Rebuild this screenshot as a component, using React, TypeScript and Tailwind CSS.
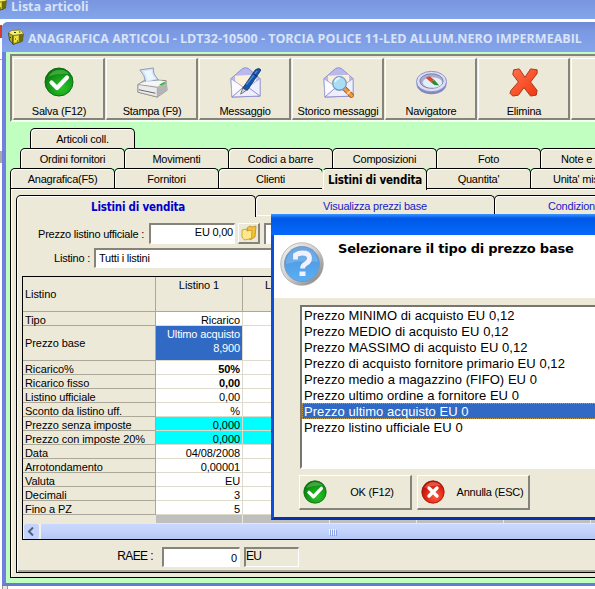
import clsx from 'clsx'
import type { ReactNode } from 'react'

const rows = [
  { label: 'Ricarico%', value: '50%', bold: true },
  { label: 'Ricarico fisso', value: '0,00', bold: true },
  { label: 'Listino ufficiale', value: '0,00' },
  { label: 'Sconto da listino uff.', value: '%' },
  { label: 'Prezzo senza imposte', value: '0,000', cyan: true },
  { label: 'Prezzo con imposte 20%', value: '0,000', cyan: true },
  { label: 'Data', value: '04/08/2008' },
  { label: 'Arrotondamento', value: '0,00001' },
  { label: 'Valuta', value: 'EU' },
  { label: 'Decimali', value: '3' },
  { label: 'Fino a PZ', value: '5' },
]

const prices = [
  'Prezzo MINIMO di acquisto EU 0,12',
  'Prezzo MEDIO di acquisto EU 0,12',
  'Prezzo MASSIMO di acquisto EU 0,12',
  'Prezzo di acquisto fornitore primario EU 0,12',
  'Prezzo medio a magazzino (FIFO) EU 0',
  'Prezzo ultimo ordine a fornitore EU 0',
  'Prezzo ultimo acquisto EU 0',
  'Prezzo listino ufficiale EU 0',
]

function AppIcon() {
  return (
    <svg width="16" height="16" viewBox="0 0 16 16" className="shrink-0">
      <path d="M.5 4 5 6v9L1.500 11z" fill="#b8b020" stroke="#3a3800" strokeWidth=".8" />
      <path d="m5 6 10-1-.5 7L5 15.500z" fill="#c9c128" stroke="#3a3800" strokeWidth=".8" />
      <path d="m.5 4 3-2.500L13 1l2.500 4L5 6.500z" fill="#f6f070" stroke="#6a6610" strokeWidth=".6" />
      <path d="m11 6 4.500-1-1 7.500-3.500 1.500z" fill="#6e6a10" />
      <path d="M6 7.500 10 7v5l-4 1.500z" fill="#eee640" />
      <path d="M6 3.500h2M11 3h1.500M7 10h1M9 12h1M2.500 8v1" stroke="#3a3800" />
    </svg>
  )
}

function CheckIcon({ size }: { size: number }) {
  return (
    <svg width={size} height={size} viewBox="0 0 30 30">
      <defs>
        <radialGradient id="green" cx=".6" cy=".7" r=".75">
          <stop offset="0" stopColor="#2cc42a" />
          <stop offset=".6" stopColor="#139817" />
          <stop offset="1" stopColor="#076c0c" />
        </radialGradient>
      </defs>
      <circle cx="15" cy="15" r="14" fill="url(#green)" stroke="#0a6f12" />
      <path d="M4 10Q9 1 19 3q4 1 6 4Q13 6 4 10z" fill="#58ba50" opacity=".65" />
      <path d="m7.500 15.500 5.500 5.500L23 10.500" fill="none" stroke="#fff" strokeWidth="4.200" strokeLinecap="round" strokeLinejoin="round" />
    </svg>
  )
}

function CancelIcon() {
  return (
    <svg width="24" height="24" viewBox="0 0 30 30">
      <defs>
        <radialGradient id="red" cx=".6" cy=".7" r=".75">
          <stop offset="0" stopColor="#ff5a3c" />
          <stop offset=".6" stopColor="#dc2414" />
          <stop offset="1" stopColor="#a50d06" />
        </radialGradient>
      </defs>
      <circle cx="15" cy="15" r="14" fill="url(#red)" stroke="#a01008" />
      <path d="M4 10Q9 1 19 3q4 1 6 4Q13 6 4 10z" fill="#f07a62" opacity=".6" />
      <path d="m10 10 10 10m0-10-10 10" stroke="#fff" strokeWidth="4.200" strokeLinecap="round" />
    </svg>
  )
}

function PrinterIcon() {
  return (
    <svg width="31" height="31" viewBox="0 0 32 32">
      <path d="m1 18 8-5 21 1 1 10-10 7-20-5z" fill="#d2d2d2" stroke="#777" strokeWidth=".8" />
      <path d="M3 3 17 1q-1 6 5 12l-13 3q-1-8-6-13z" fill="#d4e6fa" stroke="#7f93ad" strokeWidth=".9" />
      <path d="M7 4q5 0 8-1 0 6 4 9l-8 2Q10 8 7 4z" fill="#eef6ff" />
      <path d="m1 18 20 3v10L1 26z" fill="#ececec" stroke="#8a8a8a" strokeWidth=".8" />
      <path d="m21 21 10-6v9l-10 7z" fill="#b5b5b5" />
      <path d="m2 17.500 8-2.500 14-1 5 1-8 5z" fill="#f6f6f6" />
      <path d="m2 23 17 3.500v1L2 24z" fill="#666" />
      <path d="m23 18 5-2.500 2 1-5 2.500z" fill="#38b838" />
    </svg>
  )
}

function Envelope() {
  return (
    <>
      <path d="M1 12 13 1.500q3-1.500 6 0L31 12v18L2 31z" fill="#b9b9ee" stroke="#8c8cc8" />
      <path d="m5 9 22-1v13H6z" fill="#fdf0d8" />
      <path d="m1 12 13 9L2 31z" fill="#fafaff" stroke="#9a9ad4" strokeWidth=".8" />
      <path d="m31 12-13 9 13 9z" fill="#eef0ff" stroke="#9a9ad4" strokeWidth=".8" />
      <path d="m2 31 12.500-11h3L31 30z" fill="#eeeeff" stroke="#8c8cc8" strokeWidth=".9" />
    </>
  )
}

function MessageIcon() {
  return (
    <svg width="31" height="31" viewBox="0 0 32 32">
      <Envelope />
      <path d="m13 22L26 3q4-3 6 0L18 24z" fill="#1756a8" stroke="#0b2e6c" strokeWidth=".8" />
      <path d="M17 18 28 4" stroke="#4b92dc" strokeWidth="1.300" />
      <path d="m11 28 2-6 4 2z" fill="#d9d9d9" stroke="#444" strokeWidth=".7" />
      <path d="m24 7 4 3" stroke="#0b2e6c" strokeWidth="1.200" />
    </svg>
  )
}

function HistoryIcon() {
  return (
    <svg width="31" height="31" viewBox="0 0 32 32">
      <Envelope />
      <path d="m22 22 9 9" stroke="#a85018" strokeWidth="5" />
      <path d="m22 22 8.500 8.500" stroke="#f59a3c" strokeWidth="3.200" />
      <path d="m25 28 4-4" stroke="#fbe4c4" strokeWidth="1.500" />
      <circle cx="17" cy="17" r="7" fill="#a9dcf5" stroke="#7f98ba" strokeWidth="1.300" />
      <path d="M12.500 15.500q1-4 5-4" stroke="#effaff" strokeWidth="1.800" fill="none" />
    </svg>
  )
}

function CompassIcon() {
  return (
    <svg width="31" height="31" viewBox="0 0 32 32">
      <ellipse cx="16" cy="17.500" rx="15.500" ry="10.500" fill="#8586bd" />
      <ellipse cx="16" cy="15" rx="15.500" ry="10.500" fill="#dcdef8" stroke="#8e90c6" />
      <ellipse cx="16" cy="14.500" rx="12" ry="7.500" fill="#a9adcf" stroke="#7b7eae" />
      <ellipse cx="17" cy="16" rx="10" ry="5.500" fill="#e2f0f6" />
      <path d="m10 11 4-1.500 5 4-4 2z" fill="#e1452c" />
      <path d="m15 15.500 4-2 5 5.500-5-.5z" fill="#2d8b3b" />
    </svg>
  )
}

function DeleteIcon() {
  return (
    <svg width="30" height="30" viewBox="0 0 32 32">
      <defs>
        <linearGradient id="cross" x1="0" y1="0" x2="1" y2="1">
          <stop offset="0" stopColor="#ff7350" />
          <stop offset="1" stopColor="#f03810" />
        </linearGradient>
      </defs>
      <path d="m5 3 6-1 6 9 6-9 7 1v4l-7 9 7 9-1 5-6 1-7-9-6 8-6 1-3-3 1-3 8-9-6-8z" fill="url(#cross)" stroke="#a83218" strokeLinejoin="round" />
    </svg>
  )
}

function FolderIcon() {
  return (
    <svg width="16" height="16" viewBox="0 0 16 16">
      <path d="m6 3 3-2 2 1 4-1-1 11-5 3z" fill="#f3c23a" stroke="#b98b1d" strokeWidth=".8" />
      <path d="m1 5 4-1 1 2 5-1-.5 8.500-7 1.500L1 12z" fill="#ffe98a" stroke="#c29628" strokeWidth=".8" />
    </svg>
  )
}

function QuestionIcon() {
  return (
    <svg width="44" height="44" viewBox="0 0 44 44">
      <defs>
        <linearGradient id="ring" x1="0" y1="0" x2="1" y2="1">
          <stop offset="0" stopColor="#f4f4f4" />
          <stop offset=".5" stopColor="#cfcfcf" />
          <stop offset="1" stopColor="#777" />
        </linearGradient>
        <linearGradient id="ball" x1="0" y1="0" x2="0" y2="1">
          <stop offset="0" stopColor="#4c90d8" />
          <stop offset="1" stopColor="#59b0f6" />
        </linearGradient>
      </defs>
      <circle cx="22" cy="22" r="21.300" fill="url(#ring)" stroke="#a5a5a5" strokeWidth=".7" />
      <circle cx="22" cy="22" r="17.500" fill="url(#ball)" stroke="#7b93b5" strokeWidth=".8" />
      <path d="M6 22a16 16 0 0 1 32-2Q22 17 6 22z" fill="#a7cdf2" opacity=".35" />
      <path d="M15.500 17.500V13q3-2 7-2 7 0 7 5.500 0 3-3.500 5t-3.500 5" fill="none" stroke="#f1f1ff" strokeWidth="4.800" />
      <path d="M19.500 29.500h6v4.500h-6z" fill="#f1f1ff" />
    </svg>
  )
}

const tools = [
  { label: 'Salva (F12)', icon: <CheckIcon size={30} /> },
  { label: 'Stampa (F9)', icon: <PrinterIcon /> },
  { label: 'Messaggio', icon: <MessageIcon /> },
  { label: 'Storico messaggi', icon: <HistoryIcon /> },
  { label: 'Navigatore', icon: <CompassIcon /> },
  { label: 'Elimina', icon: <DeleteIcon /> },
  { label: '', icon: null },
]

function Tab({ children, className }: { children: ReactNode; className?: string }) {
  return (
    <div
      className={clsx(
        '-mr-px flex h-5 shrink-0 rounded-t-[5px] border-x border-t border-black bg-[#ece9d8] whitespace-nowrap shadow-[inset_1px_1px_0_#fff]',
        className || 'w-[105px] justify-center pt-[3px]',
      )}
    >
      {children}
    </div>
  )
}

function DialogButton({ icon, children }: { icon: ReactNode; children: ReactNode }) {
  return (
    <button className="flex h-[35px] w-[113px] items-center border-t border-r-2 border-b-2 border-l border-t-white border-r-[#85837a] border-b-[#85837a] border-l-white pl-[3px]">
      {icon}
      <span className="flex-1 pl-[7px] text-center whitespace-nowrap">{children}</span>
    </button>
  )
}

function PriceDialog() {
  return (
    <div className="absolute top-[214px] left-[271px] flex h-[306px] w-[340px] flex-col border-b-[3px] border-l-[3px] border-b-[#0831a8] border-l-[#0a4fd8] bg-[#ece9d8]">
      <div className="-ml-[3px] h-[21px] shrink-0 bg-linear-to-b from-[#3c93ff] via-[#0058e6] via-20% to-[#0669fb]" />
      <div className="flex h-[63px] shrink-0 bg-white pt-[7px] pl-[6px]">
        <QuestionIcon />
        <h2 className="-mt-px ml-[14px] font-['DejaVu_Sans'] text-[13px] leading-4 font-bold tracking-[-0.22px] whitespace-nowrap">
          Selezionare il tipo di prezzo base
        </h2>
      </div>
      <div className="mt-[7px] ml-[26px] flex h-[164px] shrink-0 flex-col border-t-2 border-b-2 border-l-2 border-t-[#77756d] border-b-white border-l-[#77756d] bg-white text-[13px] leading-[17px] tracking-[0.05px]">
        {prices.map((price, i) => (
          <div
            key={price}
            className={clsx('h-4 pl-[2px] whitespace-nowrap', i === 6 && 'bg-[#316ac5] text-white outline-1 -outline-offset-1 outline-[#c59a45] outline-dotted')}
          >
            {price}
          </div>
        ))}
      </div>
      <div className="mt-[6px] ml-[25px] flex gap-[5px]">
        <DialogButton icon={<CheckIcon size={24} />}>OK (F12)</DialogButton>
        <DialogButton icon={<CancelIcon />}>Annulla (ESC)</DialogButton>
      </div>
    </div>
  )
}

function PriceTable() {
  return (
    <div className="mt-[8px] ml-[5px] flex h-[264px] shrink-0 flex-col border-y border-l border-black tracking-[-0.08px]">
      <div className="flex h-[35px] shrink-0">
        <div className="flex w-[133px] items-center border-r border-b border-[#aca899] pl-[2px]">Listino</div>
        <div className="w-[87px] border-r border-b border-[#aca899] pt-px text-center">Listino 1</div>
        <div className="flex-1 border-b border-[#aca899] pt-px pl-[22px]">Listino 2</div>
      </div>
      <div className="flex h-[14px] shrink-0">
        <div className="w-[133px] border-r border-b border-[#aca899] pt-[2px] pl-[2px] leading-3">Tipo</div>
        <div className="w-[87px] border-r border-b border-[#dedbcc] bg-white pt-[2px] pr-[2px] text-right leading-3">Ricarico</div>
        <div className="flex-1 border-b border-[#dedbcc] bg-white" />
      </div>
      <div className="flex h-[35px] shrink-0">
        <div className="flex w-[133px] items-center border-r border-b border-[#aca899] pl-[2px]">Prezzo base</div>
        <div className="w-[87px] border-r border-b border-[#dedbcc] bg-[#316ac5] pt-px pr-[2px] text-right leading-[14px] tracking-[-0.15px] whitespace-nowrap text-white">
          Ultimo acquisto
          <br />
          8,900
        </div>
        <div className="flex-1 border-b border-[#dedbcc] bg-white" />
      </div>
      {rows.map((row) => (
        <div key={row.label} className="flex h-[14px] shrink-0 leading-3">
          <div className="w-[133px] border-r border-b border-[#aca899] pt-[2px] pl-[2px] whitespace-nowrap">{row.label}</div>
          <div
            className={clsx(
              'w-[87px] border-r border-b border-[#dedbcc] pt-[2px] pr-[2px] text-right',
              row.cyan ? 'bg-[#00ffff]' : 'bg-white',
              row.bold && 'font-bold',
            )}
          >
            {row.value}
          </div>
          <div className={clsx('flex-1 border-b border-[#dedbcc]', row.cyan ? 'bg-[#00ffff]' : 'bg-white')} />
        </div>
      ))}
      <div className="ml-[133px] flex h-[8px] shrink-0 bg-[#bfbfbf]">
        {[0, 1, 2, 3, 4].map((n) => (
          <div key={n} className="h-full w-[87px] shrink-0 border-r border-[#ece9d8]" />
        ))}
      </div>
      <div className="flex flex-1 items-center border-t border-[#ece9d8] bg-[#f3f2ea]">
        <div className="ml-px flex h-[15px] w-[15px] items-center justify-center rounded-[2px] bg-[#c4d3fc]">
          <svg width="9" height="9" viewBox="0 0 9 9">
            <path d="M6 .5 2 4.500 6 8.500" fill="none" stroke="#4d6185" strokeWidth="2" />
          </svg>
        </div>
        <div className="ml-[2px] flex h-[15px] flex-1 items-center bg-linear-to-b from-[#cad8ff] via-[#c3d2fc] to-[#b5c6f5] pl-[288px]">
          <div className="flex gap-px">
            {[0, 1, 2, 3].map((n) => (
              <div key={n} className="h-[6px] w-px bg-[#eef3ff] shadow-[1px_1px_0_#8ba5e5]" />
            ))}
          </div>
        </div>
      </div>
    </div>
  )
}

export default function App() {
  return (
    <div className="relative flex h-[589px] w-[595px] flex-col overflow-hidden bg-white font-['Liberation_Sans',sans-serif] text-[11px] leading-[14px] tracking-[-0.22px] text-black">
      <div className="flex h-[19px] shrink-0 items-start bg-linear-to-b from-[#7995e0] to-[#83a5ea]">
        <div className="-mt-1 -ml-[9px]">
          <AppIcon />
        </div>
        <span className="-mt-px ml-1 font-['Open_Sans'] text-[12.5px] leading-4 font-bold tracking-normal text-[#d8e4f8]">Lista articoli</span>
      </div>
      <div className="flex h-[567px] shrink-0 pt-[3px]">
        <div className="w-[2px] shrink-0 pt-[3px]">
          <div className="h-[13px] bg-[#d33d26]" />
          <div className="mt-[21px] h-px bg-[#aaa]" />
          <div className="mt-[91px] h-[12px] bg-[#aaa]" />
        </div>
        <div className="flex w-[593px] flex-col rounded-tl-[6px] border-b-[3px] border-l-4 border-b-[#6c79d2] border-l-[#7080dc] bg-[#c0ffc0]">
          <div className="-ml-1 flex h-[30px] shrink-0 items-center rounded-tl-[6px] bg-linear-to-b from-[#6f88d6] via-[#7b98e2] via-30% to-[#84a5eb] pl-[6px]">
            <AppIcon />
            <span className="mt-[3px] ml-[4px] font-['Open_Sans'] text-[12.5px] font-bold tracking-normal whitespace-nowrap text-[#d8e4f8]">
              ANAGRAFICA ARTICOLI - LDT32-10500 - TORCIA POLICE 11-LED ALLUM.NERO IMPERMEABIL
            </span>
          </div>
          <div className="mt-[2px] ml-1 flex h-[68px] shrink-0 gap-px overflow-hidden border-t-2 border-b-2 border-l-2 border-t-[#85837a] border-b-[#f3fff0] border-l-[#85837a] bg-[#ece9d8] pt-[2px] pl-px">
            {tools.map((tool, i) => (
              <button
                key={i}
                className="flex h-[62px] w-[92px] shrink-0 flex-col items-center border-t border-r-2 border-b-2 border-l border-t-white border-r-[#85837a] border-b-[#85837a] border-l-white pl-px"
              >
                <span className="flex h-[45px] items-center pt-px">{tool.icon}</span>
                <span className="whitespace-nowrap">{tool.label}</span>
              </button>
            ))}
          </div>
          <div className="mt-[6px] ml-6 flex h-5 shrink-0">
            <Tab>Articoli coll.</Tab>
          </div>
          <div className="ml-[14px] flex h-5 shrink-0">
            <Tab>Ordini fornitori</Tab>
            <Tab>Movimenti</Tab>
            <Tab>Codici a barre</Tab>
            <Tab>Composizioni</Tab>
            <Tab>Foto</Tab>
            <Tab className="w-[105px] pt-[3px] pl-[20px]">Note e</Tab>
          </div>
          <div className="ml-1 flex h-5 shrink-0">
            <Tab>Anagrafica(F5)</Tab>
            <Tab>Fornitori</Tab>
            <Tab>Clienti</Tab>
            <Tab className="z-10 h-[22px] w-[105px] justify-center border-l-transparent pt-[4px] pl-px font-['DejaVu_Sans_Condensed','DejaVu_Sans'] text-[11.5px] font-bold">Listini di vendita</Tab>
            <Tab>Quantita'</Tab>
            <Tab className="w-[105px] pt-[3px] pl-[22px]">Unita' misura</Tab>
          </div>
          <div className="ml-1 flex h-[390px] shrink-0 flex-col border-y border-l border-black bg-[#ece9d8] pt-[6px] pl-[5px] shadow-[inset_1px_1px_0_#fff]">
            <div className="flex h-5 shrink-0">
              <Tab className="z-10 h-[22px] w-[240px] justify-center pt-[4px] pl-[4px] font-['DejaVu_Sans_Condensed','DejaVu_Sans'] text-[11.5px] font-bold text-[#0000cc]">Listini di vendita</Tab>
              <Tab className="w-[240px] justify-center pt-[3px] text-[#1a1ac8]">Visualizza prezzi base</Tab>
              <Tab className="w-[240px] pt-[3px] pl-[53px] text-[#1a1ac8]">Condizioni</Tab>
            </div>
            <div className="flex h-[358px] shrink-0 flex-col border-b border-l border-black pt-[8px] shadow-[inset_1px_1px_0_#fff,inset_0_-2px_0_#aca899]">
              <div className="flex h-[21px] shrink-0 items-center">
                <span className="w-[127px] text-right whitespace-nowrap">Prezzo listino ufficiale :</span>
                <div className="ml-[5px] h-[21px] w-[86px] border-t-2 border-r border-b border-l-2 border-t-[#85837a] border-r-white border-b-white border-l-[#85837a] bg-white pr-px text-right">
                  EU 0,00
                </div>
                <div className="ml-[3px] flex h-[21px] w-[22px] items-center justify-center border-t border-r-2 border-b-2 border-l border-t-white border-r-[#85837a] border-b-[#85837a] border-l-white">
                  <FolderIcon />
                </div>
                <div className="ml-[4px] h-[21px] w-[86px] border-t-2 border-l-2 border-[#85837a] bg-white" />
              </div>
              <div className="mt-[4px] flex h-5 shrink-0 items-center">
                <span className="w-[73px] text-right">Listino :</span>
                <div className="ml-[4px] h-5 flex-1 border-t-2 border-b border-l-2 border-t-[#85837a] border-b-white border-l-[#85837a] bg-white pt-px pl-[3px]">
                  Tutti i listini
                </div>
              </div>
              <PriceTable />
              <div className="mt-[7px] flex h-5 shrink-0">
                <span className="w-[136px] pt-[2px] text-right text-[12px] tracking-[-0.6px]">RAEE :</span>
                <div className="ml-[9px] w-[78px] border-t-2 border-r border-b border-l-2 border-t-[#85837a] border-r-white border-b-white border-l-[#85837a] bg-white pt-[2px] pr-[2px] text-right">0</div>
                <div className="ml-[4px] w-[55px] border-t-2 border-r border-b border-l-2 border-t-[#85837a] border-r-white border-b-white border-l-[#85837a] text-[12px] tracking-[-0.8px]">EU</div>
              </div>
            </div>
          </div>
        </div>
      </div>
      <div className="ml-[2px] h-[3px] w-[6px] border-x border-[#999] bg-[#ece9d8]" />
      <PriceDialog />
    </div>
  )
}
